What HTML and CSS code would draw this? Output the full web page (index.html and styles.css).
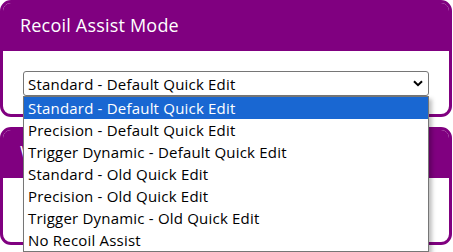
FILE: index.html
```html
<!DOCTYPE html>
<html lang="en">
<head>
  <meta charset="UTF-8" />
  <meta name="viewport" content="width=device-width, initial-scale=1.0" />
  <title>Recoil Assist</title>
  <link rel="stylesheet" href="styles.css">
</head>
<body>
  <div class="card">
    <div class="card-header">Recoil Assist Mode</div>
    <div class="card-body">
      <div class="select-wrap">
        <select id="recoilMode" class="mode-select">
          <option value="std-default" selected>Standard - Default Quick Edit</option>
          <option value="prec-default">Precision - Default Quick Edit</option>
          <option value="trig-default">Trigger Dynamic - Default Quick Edit</option>
          <option value="std-old">Standard - Old Quick Edit</option>
          <option value="prec-old">Precision - Old Quick Edit</option>
          <option value="trig-old">Trigger Dynamic - Old Quick Edit</option>
          <option value="none">No Recoil Assist</option>
        </select>
        <svg class="chevron" width="10" height="7" viewBox="0 0 10 7">
          <path d="M1 1.2 L5 5.2 L9 1.2" fill="none" stroke="#000" stroke-width="2"/>
        </svg>

        <ul class="dropdown">
          <li class="active">Standard - Default Quick Edit</li>
          <li>Precision - Default Quick Edit</li>
          <li>Trigger Dynamic - Default Quick Edit</li>
          <li>Standard - Old Quick Edit</li>
          <li>Precision - Old Quick Edit</li>
          <li>Trigger Dynamic - Old Quick Edit</li>
          <li>No Recoil Assist</li>
        </ul>
      </div>
    </div>
  </div>

  <div class="card">
    <div class="card-header">Weapon Settings</div>
    <div class="card-body tall"></div>
  </div>
</body>
</html>
```

FILE: styles.css
```css
:root {
  --purple: #800080;
  --border-gray: #767676;
  --highlight: #1967d2;
}

body {
  margin: 0;
  padding: 0;
  font-family: "Open Sans", "Noto Sans", Arial, sans-serif;
  background-color: #ffffff;
  color: #000000;
}

.card {
  border: 3px solid var(--purple);
  border-radius: 11px;
  margin: 0 1px 10px 0;
  background-color: #ffffff;
}

.card-header {
  background-color: var(--purple);
  color: #ffffff;
  font-size: 18px;
  letter-spacing: 0.2px;
  height: 48px;
  line-height: 44px;
  padding-left: 17px;
  border-radius: 8px 8px 0 0;
}

.card-body {
  padding: 20px 20px 18px 20px;
  border-radius: 0 0 8px 8px;
}

.card-body.tall {
  height: 26px;
}

.select-wrap {
  position: relative;
}

.mode-select {
  display: block;
  width: 100%;
  height: 25px;
  margin: 0;
  padding: 0 0 0 4px;
  font-family: inherit;
  font-size: 15px;
  letter-spacing: 0.2px;
  color: #000000;
  background-color: #ffffff;
  border: 1px solid var(--border-gray);
  border-radius: 3px;
  appearance: none;
  -webkit-appearance: none;
}

.chevron {
  position: absolute;
  right: 6px;
  top: 9px;
}

.dropdown {
  position: absolute;
  top: 25px;
  left: 0;
  right: 0;
  margin: 0;
  padding: 0;
  list-style: none;
  background-color: #ffffff;
  border: 1px solid var(--border-gray);
  box-shadow: 3px 3px 4px rgba(0, 0, 0, 0.25);
  z-index: 10;
}

.dropdown li {
  height: 22px;
  line-height: 22px;
  padding-left: 4px;
  font-size: 15px;
  letter-spacing: 0.2px;
  white-space: nowrap;
}

.dropdown li.active {
  background-color: var(--highlight);
  color: #ffffff;
}
```
